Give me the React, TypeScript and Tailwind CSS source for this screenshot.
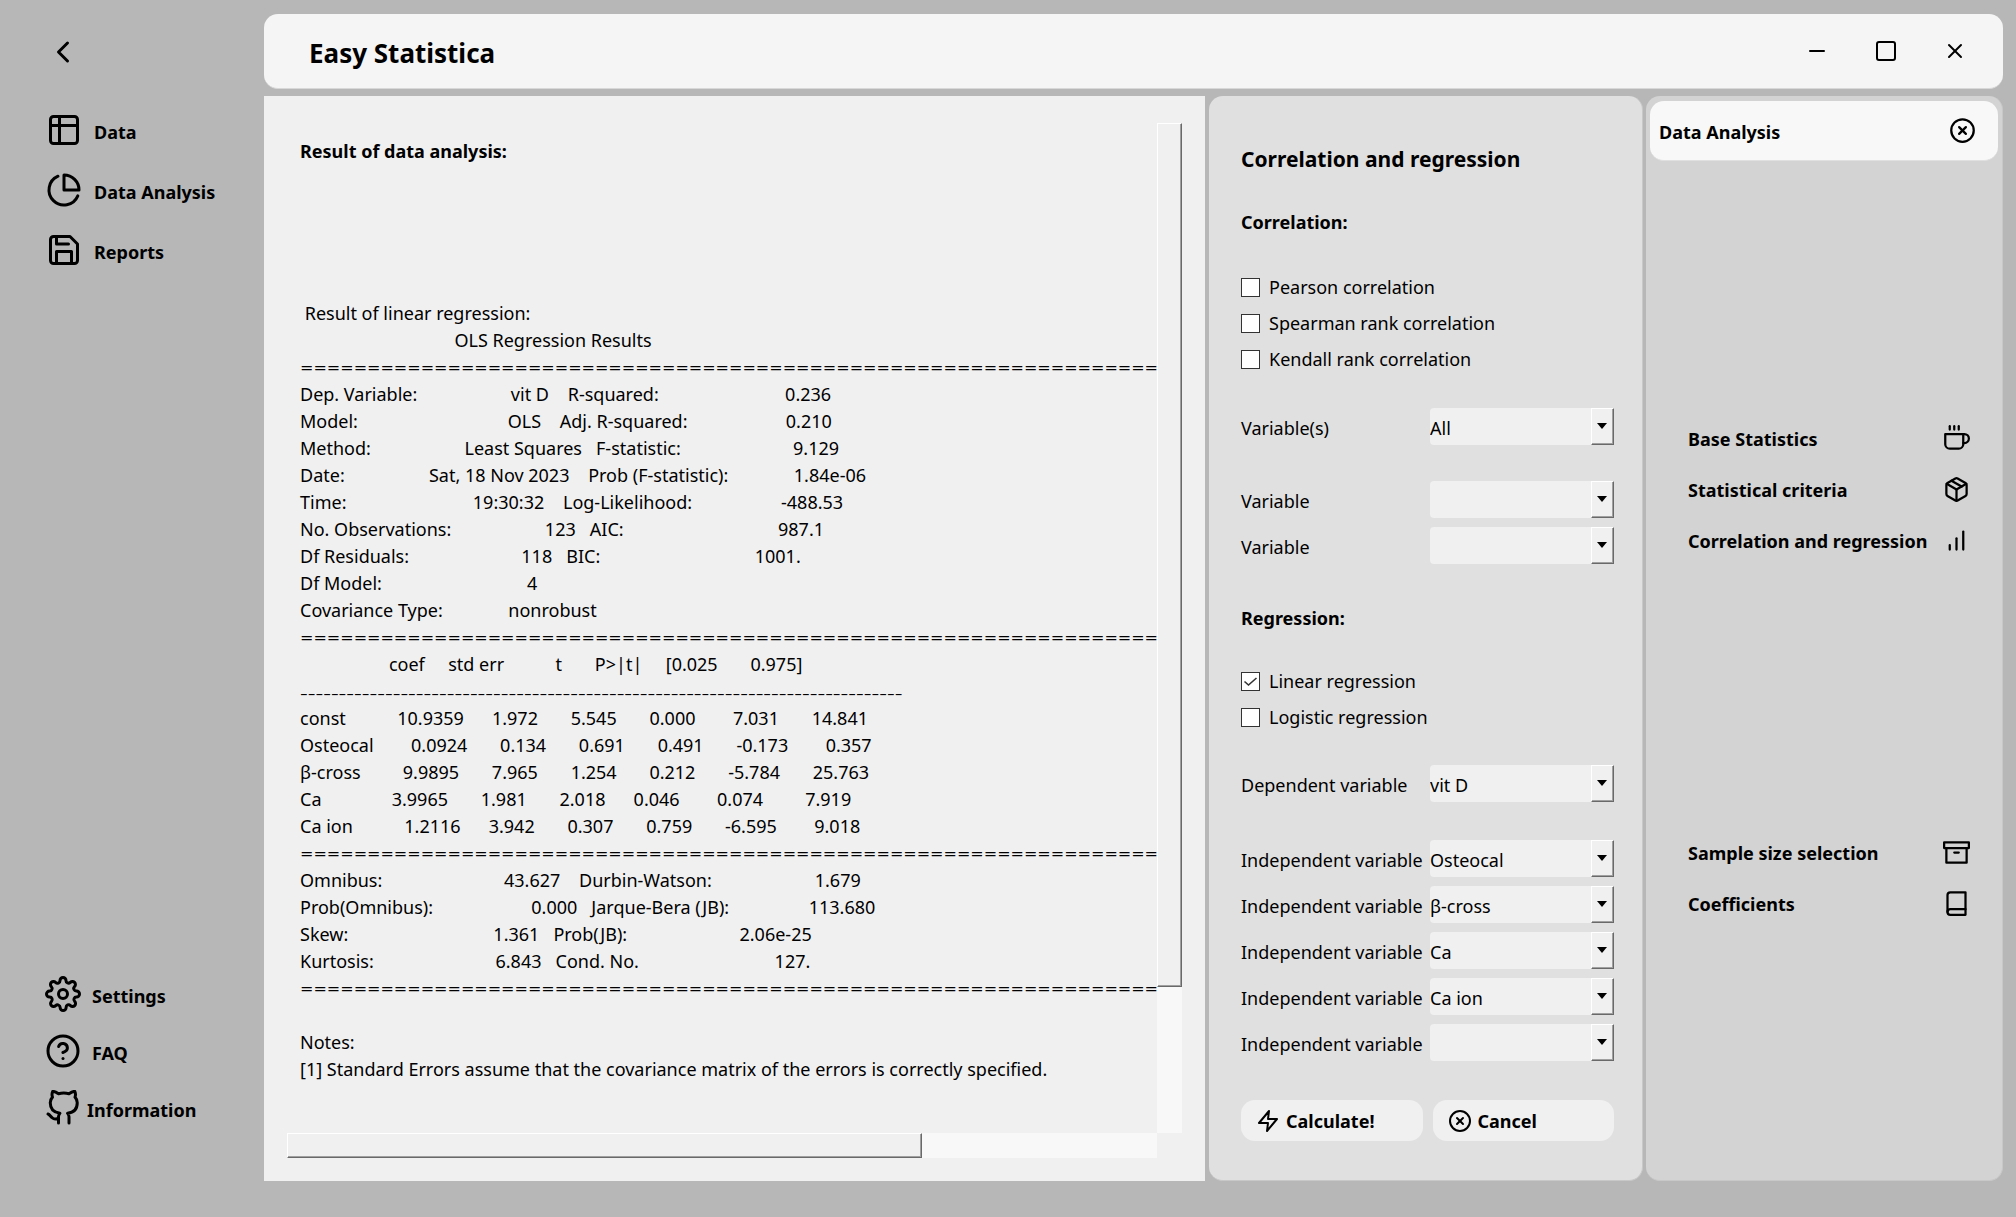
import type { ReactNode } from "react";
import {
  FiArchive, FiBarChart, FiBook, FiChevronLeft, FiCoffee, FiGithub, FiHelpCircle, FiMinus,
  FiPackage, FiPieChart, FiSave, FiSettings, FiSquare, FiTable, FiX, FiXCircle, FiZap,
} from "react-icons/fi";

// A report line is a rule or a list of [leading spaces, text] pieces.
type Line = "double" | "single" | [number, string][];

const report: Line[] = [
  [[1, "Result of linear regression:"]],
  [[33, "OLS Regression Results"]],
  "double",
  [[0, "Dep. Variable:"], [20, "vit D"], [4, "R-squared:"], [27, "0.236"]],
  [[0, "Model:"], [32, "OLS"], [4, "Adj. R-squared:"], [21, "0.210"]],
  [[0, "Method:"], [20, "Least Squares"], [3, "F-statistic:"], [24, "9.129"]],
  [[0, "Date:"], [18, "Sat, 18 Nov 2023"], [4, "Prob (F-statistic):"], [14, "1.84e-06"]],
  [[0, "Time:"], [27, "19:30:32"], [4, "Log-Likelihood:"], [19, "-488.53"]],
  [[0, "No. Observations:"], [20, "123"], [3, "AIC:"], [33, "987.1"]],
  [[0, "Df Residuals:"], [24, "118"], [3, "BIC:"], [33, "1001."]],
  [[0, "Df Model:"], [31, "4"]],
  [[0, "Covariance Type:"], [14, "nonrobust"]],
  "double",
  [[19, "coef"], [5, "std err"], [11, "t"], [7, "P>|t|"], [5, "[0.025"], [7, "0.975]"]],
  "single",
  [[0, "const"], [11, "10.9359"], [6, "1.972"], [7, "5.545"], [7, "0.000"], [8, "7.031"], [7, "14.841"]],
  [[0, "Osteocal"], [8, "0.0924"], [7, "0.134"], [7, "0.691"], [7, "0.491"], [7, "-0.173"], [8, "0.357"]],
  [[0, "β-cross"], [9, "9.9895"], [7, "7.965"], [7, "1.254"], [7, "0.212"], [7, "-5.784"], [7, "25.763"]],
  [[0, "Ca"], [15, "3.9965"], [7, "1.981"], [7, "2.018"], [6, "0.046"], [8, "0.074"], [9, "7.919"]],
  [[0, "Ca ion"], [11, "1.2116"], [6, "3.942"], [7, "0.307"], [7, "0.759"], [7, "-6.595"], [8, "9.018"]],
  "double",
  [[0, "Omnibus:"], [26, "43.627"], [4, "Durbin-Watson:"], [22, "1.679"]],
  [[0, "Prob(Omnibus):"], [21, "0.000"], [3, "Jarque-Bera (JB):"], [17, "113.680"]],
  [[0, "Skew:"], [31, "1.361"], [3, "Prob(JB):"], [24, "2.06e-25"]],
  [[0, "Kurtosis:"], [26, "6.843"], [3, "Cond. No."], [29, "127."]],
  "double",
];

function ReportLine({ line }: { line: Line }) {
  if (line === "double") return <p className="font-['DejaVu_Sans',sans-serif] text-[16px]">{"=".repeat(78)}</p>;
  if (line === "single") return <p className="font-['Open_Sans',sans-serif] text-[24px] font-light">{"-".repeat(78)}</p>;
  return <p>{line.map(([spaces, text]) => " ".repeat(spaces) + text).join("")}</p>;
}

function NavItem({ icon, label, gap }: { icon: ReactNode; label: string; gap: string }) {
  return (
    <button type="button" className={`flex h-9 items-center text-left font-bold ${gap}`}>
      {icon}
      <span className="pt-1">{label}</span>
    </button>
  );
}

function Check({ label, checked }: { label: string; checked?: boolean }) {
  return (
    <label className="flex h-9 items-center gap-[9px]">
      <span className="relative flex size-[19px]">
        <input type="checkbox" defaultChecked={checked} className="peer size-[19px] appearance-none border border-[#333] bg-white" />
        <svg viewBox="0 0 19 19" className="pointer-events-none absolute inset-0 hidden peer-checked:block" fill="none" stroke="#333" strokeWidth="1.6">
          <path d="M3.5 9.5l4 3.5 8-7" />
        </svg>
      </span>
      <span className="pt-px">{label}</span>
    </label>
  );
}

function Field({ id, label, value = "" }: { id: string; label: string; value?: string }) {
  return (
    <div className="flex h-[37px] items-center">
      <label htmlFor={id} className="w-[189px] shrink-0 pt-[3px] whitespace-nowrap">{label}</label>
      <div className="relative h-full min-w-0 flex-1">
        <select id={id} defaultValue={value} className="h-full w-full appearance-none rounded bg-[#f0f0f0] pt-[3px]">
          <option>{value}</option>
        </select>
        <span className="pointer-events-none absolute inset-y-0 right-0 flex w-[23px] items-center justify-center border-t border-r border-b border-l border-t-white border-r-[#696969] border-b-[#696969] border-l-white bg-[#f0f0f0] pr-[2px] pb-[2px] shadow-[inset_-1px_-1px_#a0a0a0]">
          <svg viewBox="0 0 10 6" className="h-[6px] w-[10px] shrink-0"><path d="M0 0h10L5 6z" /></svg>
        </span>
      </div>
    </div>
  );
}

function ActionButton({ label, icon }: { label: string; icon: ReactNode }) {
  return (
    <button type="button" className="flex h-[41px] items-center gap-[6px] rounded-[14px] bg-[#f0f0f0] pl-[15px] font-bold">
      {icon}
      <span className="pt-[2px]">{label}</span>
    </button>
  );
}

function SideItem({ label, icon }: { label: string; icon: ReactNode }) {
  return (
    <button type="button" className="flex h-[51px] w-full items-center justify-between text-left font-bold">
      <span className="pt-px">{label}</span>
      {icon}
    </button>
  );
}

export default function App() {
  return (
    <div className="flex min-h-screen bg-[#b7b7b7] font-['Noto_Sans','Open_Sans',sans-serif] text-[18px] leading-[27px] text-black">
      <nav className="flex w-[264px] shrink-0 flex-col justify-between pt-[34px] pb-[91px] pl-[45px]">
        <div className="flex flex-col items-start gap-6">
          <button type="button" aria-label="Back" className="mb-[18px]"><FiChevronLeft className="size-9" /></button>
          <div className="flex flex-col items-start gap-6 pl-px">
            <NavItem gap="gap-3" label="Data" icon={<FiTable className="size-9" />} />
            <NavItem gap="gap-3" label="Data Analysis" icon={<FiPieChart className="size-9" />} />
            <NavItem gap="gap-3" label="Reports" icon={<FiSave className="size-9" />} />
          </div>
        </div>
        <div className="flex flex-col items-start gap-[21px]">
          <NavItem gap="gap-[11px]" label="Settings" icon={<FiSettings className="size-9" />} />
          <NavItem gap="gap-[11px]" label="FAQ" icon={<FiHelpCircle className="size-9" />} />
          <NavItem gap="gap-[6px]" label="Information" icon={<FiGithub className="size-9" />} />
        </div>
      </nav>

      <div className="flex min-w-0 flex-1 flex-col gap-[7px] pt-[14px] pr-[13px] pb-9">
        <header className="flex h-[75px] items-center justify-between rounded-[14px] border-b border-[#d8d8d8] bg-[#f5f5f5] pr-9 pl-[45px]">
          <h1 className="pt-1 text-[26px] leading-9 font-bold">Easy Statistica</h1>
          <div className="flex gap-[45px]">
            <button type="button" aria-label="Minimize"><FiMinus className="size-6" /></button>
            <button type="button" aria-label="Maximize"><FiSquare className="size-6" /></button>
            <button type="button" aria-label="Close"><FiX className="size-6" /></button>
          </div>
        </header>

        <div className="flex flex-1">
          <main className="flex min-w-0 flex-1 bg-[#f0f0f0] px-[23px] pt-[27px] pb-[23px]">
            <div className="flex min-w-0 flex-1 flex-col">
              <div className="flex-1 overflow-hidden pt-[15px] pl-[13px] whitespace-pre">
                <h2 className="mb-[135px] font-bold">Result of data analysis:</h2>
                {report.map((line, i) => <ReportLine key={i} line={line} />)}
                <p className="mt-[27px]">Notes:</p>
                <p>[1] Standard Errors assume that the covariance matrix of the errors is correctly specified.</p>
              </div>
              <div className="h-[25px] bg-[#f8f8f8]">
                <div className="h-full w-[73%] border border-t-white border-r-[#696969] border-b-[#696969] border-l-white bg-[#f0f0f0] shadow-[inset_-1px_-1px_#a0a0a0]" />
              </div>
            </div>
            <div className="mb-[25px] w-[25px] bg-[#f8f8f8]">
              <div className="h-[864px] border border-t-white border-r-[#696969] border-b-[#696969] border-l-white bg-[#f0f0f0] shadow-[inset_-1px_-1px_#a0a0a0]" />
            </div>
          </main>

          <form className="ml-1 flex w-[434px] shrink-0 flex-col rounded-[14px] border-r border-b border-[#c8c8c8] bg-[#e0e0e0] pt-[47px] pr-7 pb-[39px] pl-8">
            <h2 className="text-[21px] leading-8 font-bold">Correlation and regression</h2>
            <h3 className="mt-[34px] font-bold">Correlation:</h3>
            <div className="mt-[33px]">
              <Check label="Pearson correlation" />
              <Check label="Spearman rank correlation" />
              <Check label="Kendall rank correlation" />
            </div>
            <div className="mt-[31px]"><Field id="all" label="Variable(s)" value="All" /></div>
            <div className="mt-9 flex flex-col gap-[9px]">
              <Field id="v1" label="Variable" />
              <Field id="v2" label="Variable" />
            </div>
            <h3 className="mt-[41px] font-bold">Regression:</h3>
            <div className="mt-[31px]">
              <Check label="Linear regression" checked />
              <Check label="Logistic regression" />
            </div>
            <div className="mt-[30px]"><Field id="dep" label="Dependent variable" value="vit D" /></div>
            <div className="mt-[38px] flex flex-col gap-[9px]">
              <Field id="i1" label="Independent variable" value="Osteocal" />
              <Field id="i2" label="Independent variable" value="β-cross" />
              <Field id="i3" label="Independent variable" value="Ca" />
              <Field id="i4" label="Independent variable" value="Ca ion" />
              <Field id="i5" label="Independent variable" />
            </div>
            <div className="mt-auto grid grid-cols-2 gap-[10px]">
              <ActionButton label="Calculate!" icon={<FiZap className="size-6" />} />
              <ActionButton label="Cancel" icon={<FiXCircle className="size-6" />} />
            </div>
          </form>

          <aside className="ml-[3px] w-[357px] shrink-0 rounded-[14px] border-r border-b border-[#c8c8c8] bg-[#d3d3d3] px-1 pt-[5px]">
            <div className="flex h-[60px] items-center justify-between rounded-[14px] border-b border-[#e0e0e0] bg-[#f8f8f8] pr-[22px] pl-[9px]">
              <h2 className="pt-[3px] font-bold">Data Analysis</h2>
              <button type="button" aria-label="Close panel"><FiXCircle className="size-[27px]" /></button>
            </div>
            <div className="mt-[252px] pr-7 pl-[38px]">
              <SideItem label="Base Statistics" icon={<FiCoffee className="size-[27px]" />} />
              <SideItem label="Statistical criteria" icon={<FiPackage className="size-[27px]" />} />
              <SideItem label="Correlation and regression" icon={<FiBarChart className="size-[27px]" />} />
            </div>
            <div className="mt-[261px] pr-7 pl-[38px]">
              <SideItem label="Sample size selection" icon={<FiArchive className="size-[27px]" />} />
              <SideItem label="Coefficients" icon={<FiBook className="size-[27px]" />} />
            </div>
          </aside>
        </div>
      </div>
    </div>
  );
}
